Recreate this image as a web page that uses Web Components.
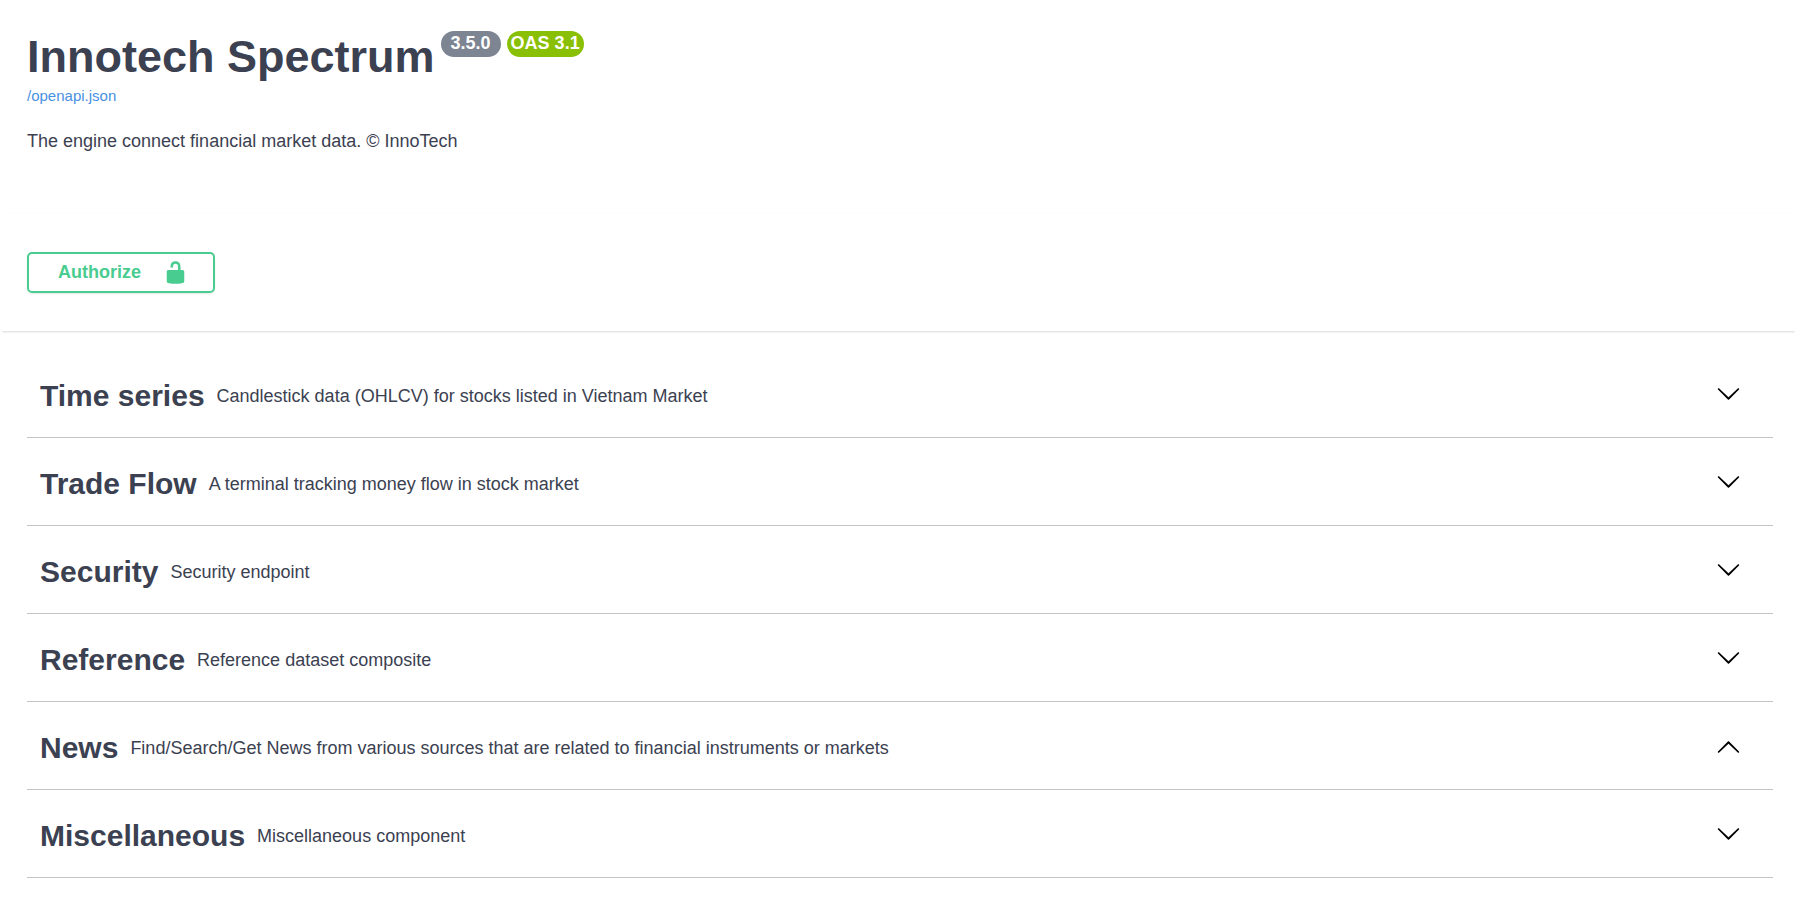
<!DOCTYPE html>
<html lang="en">
<head>
<meta charset="utf-8">
<title>Innotech Spectrum</title>
<style>
html{background:#fff}
body{margin:0 0 0 2px;font-family:"Liberation Sans",Arial,sans-serif;color:#3b4151;overflow-x:hidden}
body{--gutter-start:25px;--gutter-end:22px;--green:#49cc90}
</style>
</head>
<body>
<api-page>
  <api-info slot="info" heading="Innotech Spectrum" version="3.5.0" oas="OAS 3.1" spec="/openapi.json">The engine connect financial market data. © InnoTech</api-info>
  <auth-bar slot="auth">Authorize</auth-bar>
  <api-tag name="Time series">Candlestick data (OHLCV) for stocks listed in Vietnam Market</api-tag>
  <api-tag name="Trade Flow">A terminal tracking money flow in stock market</api-tag>
  <api-tag name="Security">Security endpoint</api-tag>
  <api-tag name="Reference">Reference dataset composite</api-tag>
  <api-tag name="News" collapsed>Find/Search/Get News from various sources that are related to financial instruments or markets</api-tag>
  <api-tag name="Miscellaneous">Miscellaneous component</api-tag>
</api-page>

<template id="page-tpl">
  <style>
    :host{display:block}
    main{padding:19px var(--gutter-end) 0 var(--gutter-start)}
  </style>
  <slot name="info"></slot>
  <slot name="auth"></slot>
  <main><slot></slot></main>
</template>

<template id="badge-tpl">
  <style>
    :host{display:block;height:26px;line-height:24px;padding:0 10px;border-radius:13px;background:#7d8492;color:#fff;font-size:18px;font-weight:700;box-sizing:border-box;white-space:nowrap}
    :host([kind="oas"]){background:#89bf04;padding:0 4px}
  </style>
  <slot></slot>
</template>

<template id="info-tpl">
  <style>
    :host{display:block;padding:31px var(--gutter-end) 61px var(--gutter-start)}
    .head{display:flex;align-items:flex-start;gap:6px}
    h1{margin:0;font-size:45px;line-height:52px;font-weight:700}
    a{display:block;width:max-content;margin-top:4px;font-size:15px;line-height:18px;color:#4990e2;text-decoration:none}
    p{margin:24px 0 0;font-size:18px;line-height:24px}
  </style>
  <div class="head"><h1></h1><version-badge class="version"></version-badge><version-badge kind="oas"></version-badge></div>
  <a href="#"></a>
  <p><slot></slot></p>
</template>

<template id="auth-tpl">
  <style>
    :host{display:block;padding:38px var(--gutter-end) 38px var(--gutter-start);background:#fff;box-shadow:0 1px 2px rgba(0,0,0,.15)}
    button{display:flex;align-items:center;gap:22px;height:41px;padding:0 25px 0 29px;border:2px solid var(--green);border-radius:5px;background:transparent;color:var(--green);font:700 18px "Liberation Sans",Arial,sans-serif;box-shadow:0 1px 2px rgba(0,0,0,.1);cursor:pointer}
    svg{display:block;width:25px;height:25px;fill:var(--green)}
  </style>
  <button type="button"><span><slot></slot></span><svg viewBox="0 0 20 20" aria-hidden="true"><path d="M15.8 8H14V5.6C14 2.703 12.665 1 10 1 7.334 1 6 2.703 6 5.6V6h2v-.801C8 3.754 8.797 3 10 3c1.203 0 2 .754 2 2.199V8H4c-.553 0-1 .646-1 1.199V17c0 .549.428 1.139.951 1.307l1.197.387C5.672 18.861 6.55 19 7.1 19h5.8c.549 0 1.428-.139 1.951-.307l1.196-.387c.524-.167.953-.757.953-1.306V9.199C17 8.646 16.352 8 15.8 8z"/></svg></button>
</template>

<template id="tag-tpl">
  <style>
    :host{display:block}
    section{display:flex;align-items:center;height:88px;padding:5px 32px 0 13px;border-bottom:1px solid #c4c5c8;box-sizing:border-box}
    h2{margin:0;font-size:30px;line-height:36px;font-weight:700;white-space:nowrap}
    p{flex:1;margin:0;padding:0 12px;font-size:18px;line-height:24px}
    button{padding:0 0 3px;border:0;background:none;cursor:pointer}
    svg{display:block;width:25px;height:25px}
    :host([collapsed]) svg{transform:scaleY(-1)}
  </style>
  <section><h2></h2><p><slot></slot></p><button type="button" aria-label="Toggle section"><svg viewBox="0 1 20 20" aria-hidden="true"><path d="M17.418 6.109c.272-.268.709-.268.979 0s.271.701 0 .969l-7.908 7.83c-.27.268-.707.268-.979 0l-7.908-7.83c-.27-.268-.27-.701 0-.969.271-.268.709-.268.979 0L10 13.25l7.418-7.141z"/></svg></button></section>
</template>

<script>
class Templated extends HTMLElement {
  constructor() {
    super();
    this.attachShadow({mode: "open"}).append(document.getElementById(this.constructor.template).content.cloneNode(true));
  }
}
customElements.define("version-badge", class extends Templated { static template = "badge-tpl"; });
customElements.define("auth-bar", class extends Templated { static template = "auth-tpl"; });
customElements.define("api-page", class extends Templated { static template = "page-tpl"; });
customElements.define("api-info", class extends Templated {
  static template = "info-tpl";
  connectedCallback() {
    const q = s => this.shadowRoot.querySelector(s);
    q("h1").textContent = this.getAttribute("heading");
    q(".version").textContent = this.getAttribute("version");
    q('[kind="oas"]').textContent = this.getAttribute("oas");
    q("a").textContent = this.getAttribute("spec");
    q("a").href = this.getAttribute("spec");
  }
});
customElements.define("api-tag", class extends Templated {
  static template = "tag-tpl";
  connectedCallback() {
    this.shadowRoot.querySelector("h2").textContent = this.getAttribute("name");
    this.shadowRoot.querySelector("button").onclick = () => this.toggleAttribute("collapsed");
  }
});
</script>
</body>
</html>
